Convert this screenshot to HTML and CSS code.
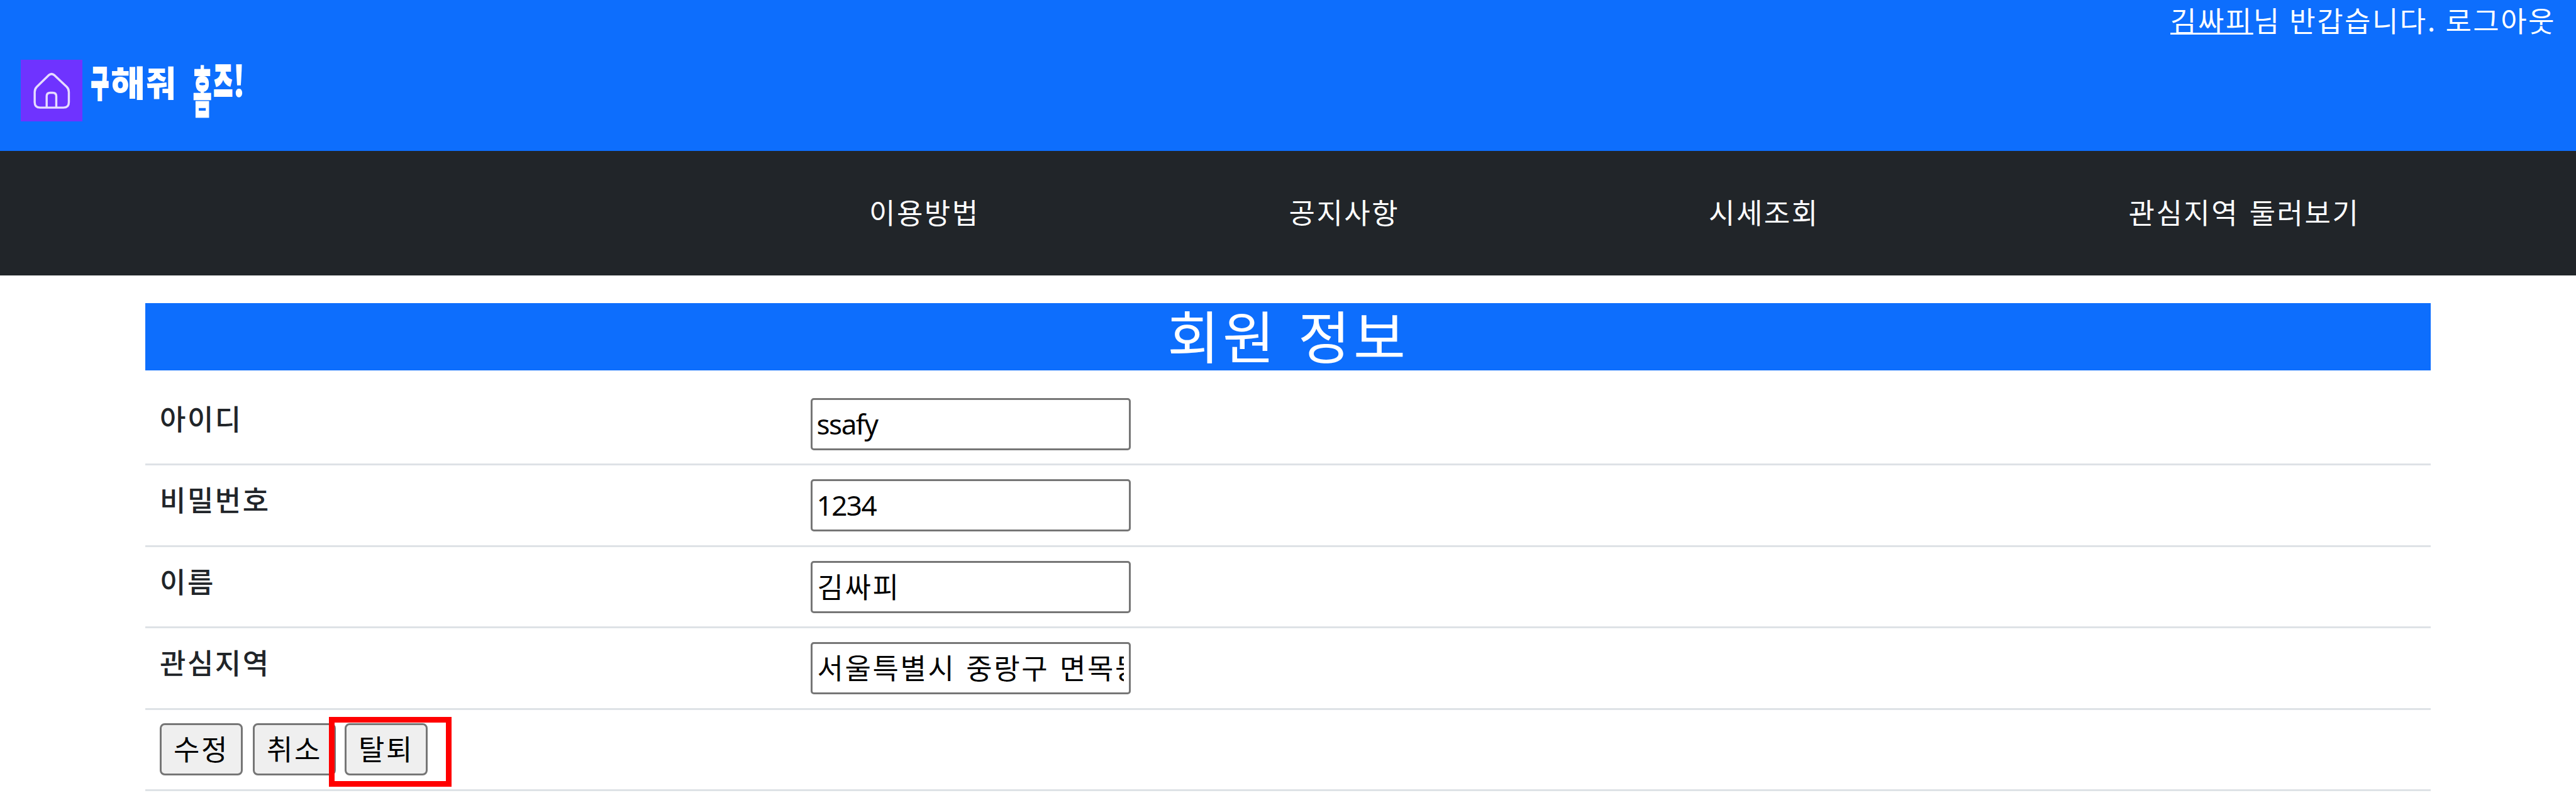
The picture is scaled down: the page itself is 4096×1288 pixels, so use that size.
FILE: index.html
```html
<!DOCTYPE html>
<html lang="ko">
<head>
<meta charset="utf-8">
<title>회원 정보</title>
<link rel="stylesheet" href="styles.css">
</head>
<body>
<header class="top">
  <div class="greeting"><a class="user" href="#">김싸피</a>님 반갑습니다. 로그아웃</div>
  <a class="brand" href="#">
    <svg class="brand-icon" viewBox="0 0 314 314">
      <rect width="314" height="314" fill="#6f33ff"/>
      <path d="M142 79Q157 66 172 79L234 138Q245 149 245 164V216Q245 244 217 244H99Q71 244 71 216V164Q71 149 82 138ZM132 244V186Q132 168 150 168H163Q181 168 181 186V244" fill="none" stroke="#e6dcff" stroke-width="11" stroke-linejoin="round"/>
    </svg>
    <svg class="brand-name" viewBox="0 0 250 100">
      <text class="narrow" transform="translate(-1 58) scale(.3 .57)">구</text>
      <text transform="translate(30 58) scale(.6 .56)">해</text>
      <text transform="translate(86 58) scale(.52 .56)">줘</text>
      <text class="tall" transform="translate(161 84) scale(.32 .87)">홈</text>
      <text class="narrow" transform="translate(194 58) scale(.32 .62)">즈</text>
      <text transform="translate(224 59) scale(.5 .68)">!</text>
    </svg>
  </a>
</header>
<nav class="menu">
  <a href="#">이용방법</a><a href="#">공지사항</a><a href="#">시세조회</a><a href="#">관심지역 둘러보기</a>
</nav>
<main class="content">
  <h1 class="title">회원 정보</h1>
  <form class="info">
    <div class="row"><label>아이디</label><input class="latin" value="ssafy"></div>
    <div class="row"><label>비밀번호</label><input class="latin" value="1234"></div>
    <div class="row"><label>이름</label><input value="김싸피"></div>
    <div class="row"><label>관심지역</label><input value="서울특별시 중랑구 면목동"></div>
    <div class="row actions">
      <button type="button">수정</button><button type="button">취소</button><button type="button" class="leave">탈퇴</button>
      <span class="highlight"></span>
    </div>
  </form>
</main>
</body>
</html>
```
FILE: styles.css
```css
* { box-sizing: border-box; }
body {
  margin: 0;
  background: #fff;
  color: #212529;
  font-family: "Noto Sans CJK KR", sans-serif;
  font-size: 45px;
  line-height: 66px;
  letter-spacing: 2.5px;
  word-spacing: 1.5px;
  overflow: hidden;
}
a { color: inherit; text-decoration: none; }

.top { height: 239.5px; background: #0d6efd; color: #fff; }
.greeting { height: 94.5px; padding-right: 32px; line-height: 64px; text-align: right; word-spacing: -1.5px; }
.user { text-decoration: underline; text-decoration-thickness: 3px; text-underline-offset: 1px; text-decoration-skip-ink: none; }
.brand { display: flex; margin-left: 33px; gap: 15px; }
.brand-icon { width: 98px; height: 98px; }
.brand-name { width: 250px; height: 100px; overflow: visible; }
.brand-name text { font-size: 100px; font-weight: 900; fill: #fff; letter-spacing: 0; }
.brand-name .narrow { stroke: #fff; stroke-width: 3px; vector-effect: non-scaling-stroke; }
.brand-name .tall { font-weight: 700; stroke: #fff; stroke-width: 2px; vector-effect: non-scaling-stroke; }

.menu {
  display: grid;
  grid-template-columns: repeat(4, 667.5px);
  align-items: center;
  height: 198px;
  padding: 0 0 3px 1382px;
  background: #212529;
  color: #fff;
}

.content { width: 3634px; margin: 44px 0 0 231px; }
.title {
  height: 107.5px;
  margin: 0 0 22px;
  background: #0d6efd;
  color: #fff;
  font-size: 90px;
  font-weight: 400;
  line-height: 98px;
  letter-spacing: 5px;
  word-spacing: 2px;
  text-align: center;
}
.row {
  display: flex;
  height: 129.4px;
  padding: 21.8px 23px 0;
  border-bottom: 3px solid #dee2e6;
}
.row label { width: 1034.5px; font-weight: 500; line-height: 64px; }
.row input {
  width: 509px;
  height: 83px;
  padding: 1px 8px 4px;
  border: 3px solid #767676;
  border-radius: 5px;
  background: #fff;
  color: #000;
  font: inherit;
  letter-spacing: 2.6px;
  word-spacing: 1.5px;
}
.row input.latin { padding: 2px 7px 3px; font-family: "Noto Sans", sans-serif; font-size: 44px; letter-spacing: -1.5px; }
.actions { position: relative; gap: 16px; }
.actions button {
  width: 132px;
  height: 83px;
  padding: 0 0 3px;
  border: 3px solid #767676;
  border-radius: 8px;
  background: #efefef;
  color: #000;
  font: inherit;
  letter-spacing: 2.5px;
}
.actions .leave { margin-left: -2px; }
.highlight {
  position: absolute;
  left: 292px;
  top: 11px;
  width: 194.5px;
  height: 111px;
  border: 9.5px solid #f00;
}
```
